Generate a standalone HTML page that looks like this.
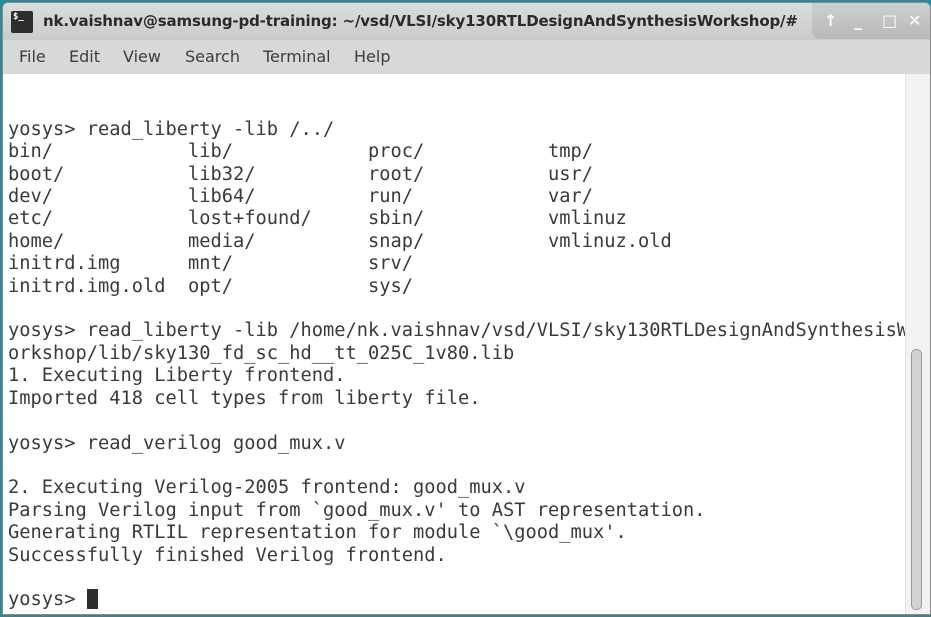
<!DOCTYPE html>
<html><head><meta charset="utf-8"><style>
body{margin:0;width:931px;height:617px;overflow:hidden;background:#2a8a9a;position:relative}
.win{position:absolute;left:2px;top:2px;width:929px;height:613px;background:#fff;border-radius:6px 6px 0 0;overflow:hidden;border:1px solid #8a8a8a;box-sizing:border-box}
.title{position:absolute;left:0;top:0;width:100%;height:37px;background:linear-gradient(#dcdcdc,#cbcbcb);}
.title .ic{position:absolute;left:8px;top:8px;width:22px;height:22px;background:#2e2e2e;border-radius:2px;color:#fff;font:bold 9px "DejaVu Sans Mono",monospace;line-height:12px;padding-left:2px;box-sizing:border-box}
.title .t{position:absolute;left:40px;top:9px;font:bold 15px "DejaVu Sans",sans-serif;color:#2a2a2a;white-space:nowrap;letter-spacing:-0.15px}
.btns{position:absolute;right:0;top:0;width:118px;height:36px;background:linear-gradient(#cfcfcf,#b8b8b8);border-radius:0 0 0 8px;font:bold 16px "DejaVu Sans",sans-serif;color:#fff}
.btns span{position:absolute;top:8px}
.menu{position:absolute;left:0;top:37px;width:100%;height:34px;background:#d8d8d8;font:16px "DejaVu Sans",sans-serif;color:#3c3c3c}
.menu span{position:absolute;top:7px}
.term{position:absolute;left:5px;top:71px;font:18.7px "DejaVu Sans Mono",monospace;line-height:22.4px;color:#3a3a3a;white-space:pre;margin:0}
.sb{position:absolute;right:0;top:71px;width:24px;height:542px;background:#f2f2f2;border-left:1px solid #e4e4e4}
.th{position:absolute;left:5px;top:275px;width:9px;height:259px;background:#d2d2d2;border:1px solid #9a9a9a;border-radius:5px}
.cur{display:inline-block;width:11px;height:20px;background:#2e2e2e;vertical-align:-4px}
</style></head><body>
<div class="win">
<div class="title"><div class="ic">$_</div><div class="t">nk.vaishnav@samsung-pd-training: ~/vsd/VLSI/sky130RTLDesignAndSynthesisWorkshop/#</div>
<div class="btns"><span style="left:12px">↑</span><span style="left:42px">_</span><span style="left:70px">□</span><span style="left:96px">✕</span></div></div>
<div class="menu"><span style="left:16px">File</span><span style="left:66px">Edit</span><span style="left:120px">View</span><span style="left:182px">Search</span><span style="left:260px">Terminal</span><span style="left:351px">Help</span></div>
<pre class="term">
 

yosys&gt; read_liberty -lib /../
bin/            lib/            proc/           tmp/
boot/           lib32/          root/           usr/
dev/            lib64/          run/            var/
etc/            lost+found/     sbin/           vmlinuz
home/           media/          snap/           vmlinuz.old
initrd.img      mnt/            srv/
initrd.img.old  opt/            sys/

yosys&gt; read_liberty -lib /home/nk.vaishnav/vsd/VLSI/sky130RTLDesignAndSynthesisW
orkshop/lib/sky130_fd_sc_hd__tt_025C_1v80.lib
1. Executing Liberty frontend.
Imported 418 cell types from liberty file.

yosys&gt; read_verilog good_mux.v

2. Executing Verilog-2005 frontend: good_mux.v
Parsing Verilog input from `good_mux.v' to AST representation.
Generating RTLIL representation for module `\good_mux'.
Successfully finished Verilog frontend.

yosys&gt; <span class="cur"></span></pre>
<div class="sb"><div class="th"></div></div>
</div>
</body></html>
